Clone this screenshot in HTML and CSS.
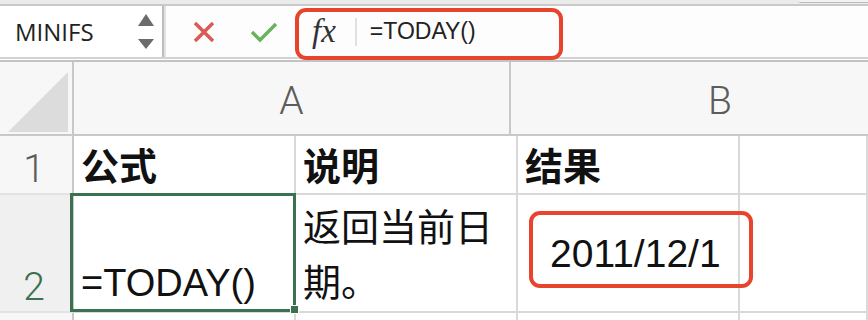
FILE: index.html
```html
<!DOCTYPE html>
<html lang="zh-CN">
<head>
<meta charset="utf-8">
<title>TODAY</title>
<link rel="stylesheet" href="styles.css">
</head>
<body>
<div class="page">
  <div class="topstrip"><div class="tab"></div></div>
  <div class="bar">
    <div class="namebox">
      <span class="name">MINIFS</span>
      <svg class="spin" width="16" height="36" viewBox="0 0 16 36"><polygon points="8,0 16,12 0,12"/><polygon points="0,25 16,25 8,35"/></svg>
    </div>
    <div class="formula">
      <svg class="cancel" width="22" height="22" viewBox="0 0 22 22"><path d="M2 2 L20 20 M20 2 L2 20"/></svg>
      <svg class="enter" width="28" height="22" viewBox="0 0 28 22"><path d="M2 11 L10 19 L26 3"/></svg>
      <span class="fx">fx</span>
      <span class="sep"></span>
      <span class="ftext">=TODAY()</span>
    </div>
  </div>
  <div class="colhead">
    <div class="corner"><svg width="60" height="60" viewBox="0 0 60 60"><polygon points="60,0 60,60 0,60"/></svg></div>
    <div class="ch cha">A</div>
    <div class="ch chb">B</div>
  </div>
  <div class="grid">
    <div class="rh">1</div>
    <div class="cell cjk hd">公式</div>
    <div class="cell cjk hd">说明</div>
    <div class="cell cjk hd">结果</div>
    <div class="cell"></div>

    <div class="rh rsel">2</div>
    <div class="cell a2"><span>=TODAY()</span><div class="selection"><div class="handle"></div></div></div>
    <div class="cell cjk b2">返回当前日期。</div>
    <div class="cell c2">2011/12/1</div>
    <div class="cell"></div>

    <div class="rh"></div>
    <div class="cell"></div>
    <div class="cell"></div>
    <div class="cell"></div>
    <div class="cell"></div>
  </div>
  <div class="mark mark-fx"></div>
  <div class="mark mark-date"></div>
</div>
</body>
</html>
```

FILE: styles.css
```css
html, body {
  margin: 0;
  padding: 0;
  background: #ffffff;
}

.page {
  position: relative;
  width: 868px;
  height: 320px;
  overflow: hidden;
  font-family: "Liberation Sans", "Noto Sans CJK SC", sans-serif;
  color: #111;
}

.topstrip {
  height: 4px;
  background: #ebebeb;
  border-bottom: 2px solid #c9c9c9;
  display: flex;
  justify-content: flex-end;
}

.tab {
  width: 70px;
  height: 2px;
  background: #f2f2f2;
  border-bottom: 1px solid #bdbdbd;
  border-bottom-left-radius: 4px;
}

.bar {
  display: flex;
  height: 51px;
  border-bottom: 2px solid #d2d2d2;
  background: #fdfdfd;
}

.namebox {
  width: 164px;
  box-sizing: border-box;
  border-right: 2px solid #bdbdbd;
  display: flex;
  align-items: center;
  padding-left: 15px;
  background: #fff;
}

.name {
  flex: 1;
  font-family: "Open Sans", "Liberation Sans", sans-serif;
  font-size: 24px;
  color: #222;
}

.spin {
  margin-right: 8px;
  fill: #6b6b6b;
}

.formula {
  flex: 1;
  border-left: 2px solid #e2e2e2;
  display: flex;
  align-items: center;
}

.cancel {
  margin-left: 27px;
  fill: none;
  stroke: #db5a55;
  stroke-width: 3.5;
}

.enter {
  margin-left: 35px;
  fill: none;
  stroke: #6cb25c;
  stroke-width: 3.5;
}

.fx {
  margin-left: 34px;
  font-family: "Liberation Serif", "DejaVu Serif", serif;
  font-style: italic;
  font-size: 33px;
  color: #333;
  line-height: 1;
}

.sep {
  margin-left: 19px;
  width: 2px;
  height: 28px;
  background: #e0e0e0;
}

.ftext {
  margin-left: 13px;
  font-size: 23px;
  color: #222;
}

.colhead {
  display: flex;
  height: 72px;
  margin-top: 1px;
  border-top: 2px solid #c2c2c2;
  border-bottom: 2px solid #c8c8c8;
  background: #f7f7f7;
}

.corner {
  width: 74px;
  flex-shrink: 0;
  box-sizing: border-box;
  border-right: 2px solid #c8c8c8;
  padding: 10px 4px 2px 8px;
}

.corner svg {
  display: block;
  fill: #dcdcdc;
}

.ch {
  flex-shrink: 0;
  box-sizing: border-box;
  text-align: center;
  font-family: Roboto, "Liberation Sans", sans-serif;
  font-weight: 300;
  font-size: 39px;
  line-height: 66px;
  padding-top: 6px;
  color: #5c5c5c;
}

.cha {
  width: 437px;
  border-right: 2px solid #c8c8c8;
}

.chb {
  width: 418px;
}

.grid {
  display: grid;
  grid-template-columns: 74px 222px 222px 222px 1fr;
  grid-template-rows: 59px 118px 40px;
}

.rh {
  box-sizing: border-box;
  background: #f7f7f7;
  border-right: 2px solid #c8c8c8;
  border-bottom: 2px solid #e3e3e3;
  display: flex;
  align-items: flex-end;
  justify-content: center;
  padding-right: 4px;
  padding-bottom: 4px;
  font-family: Roboto, "Liberation Sans", sans-serif;
  font-weight: 300;
  font-size: 39px;
  line-height: 1;
  color: #5c5c5c;
}

.rsel {
  background: #f0f0f0;
  color: #3b7150;
}

.cell {
  box-sizing: border-box;
  border-right: 2px solid #d9d9d9;
  border-bottom: 2px solid #d9d9d9;
  padding-left: 7px;
  font-size: 38px;
  line-height: 55px;
  display: flex;
  align-items: flex-end;
  color: #111;
}

.cjk {
  font-family: "Noto Sans CJK SC", "Liberation Sans", sans-serif;
}

.hd {
  font-weight: 700;
  padding-bottom: 2px;
}

.b2 {
  padding-bottom: 4px;
}

.a2 {
  position: relative;
}

.c2 {
  align-items: center;
  padding-left: 32px;
  font-size: 39px;
  line-height: 1;
}

.selection {
  position: absolute;
  top: -2px;
  left: -4px;
  right: -2px;
  bottom: -1px;
  border: 3px solid #3b7150;
}

.handle {
  position: absolute;
  right: -6px;
  bottom: -5px;
  width: 7px;
  height: 7px;
  background: #3b7150;
  border: 1px solid #fff;
}

.mark {
  position: absolute;
  box-sizing: border-box;
  border: 4px solid #e8432d;
  border-radius: 11px;
}

.mark-fx {
  left: 295px;
  top: 8px;
  width: 268px;
  height: 52px;
}

.mark-date {
  left: 529px;
  top: 211px;
  width: 224px;
  height: 77px;
}
```
